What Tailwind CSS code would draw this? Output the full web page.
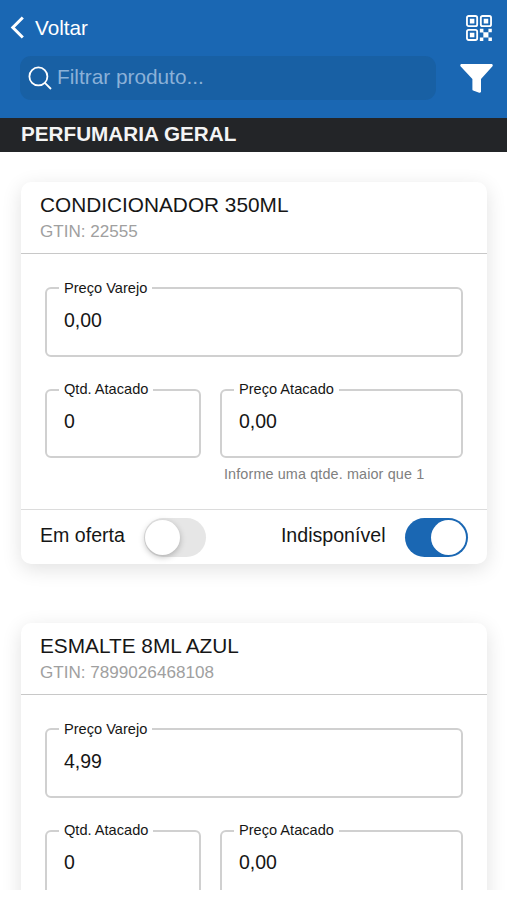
<!DOCTYPE html>
<html lang="pt-BR">
<head>
  <meta charset="UTF-8" />
  <meta name="viewport" content="width=device-width, initial-scale=1.0"/>
  <title>Produtos</title>
  <script src="https://cdn.jsdelivr.net/npm/@tailwindcss/browser@4"></script>
</head>

<body class="bg-white font-['Liberation_Sans',Arial,sans-serif] text-[#161616]">
  <div class="h-[890px] overflow-hidden">

    <!-- Topo -->
    <header class="h-[118px] bg-[#1a67b3] text-white">
      <div class="flex h-14 items-center justify-between pl-[10px] pr-[15px]">
        <a class="flex items-center text-[20.7px]">
          <svg class="mr-[11px] h-[23px] w-[14px] -mt-px" viewBox="0 0 14 23" fill="none" stroke="currentColor" stroke-width="3"><path d="M12.8 1.5 2.8 11.5l10 10"/></svg>
          Voltar
        </a>
        <svg class="h-[26px] w-[26px]" viewBox="0 0 27 27" fill="none" stroke="currentColor" stroke-width="1.9">
          <rect x="1" y="1" width="10.6" height="10.6" rx="1.8"/>
          <rect x="15.4" y="1" width="10.6" height="10.6" rx="1.8"/>
          <rect x="1" y="15.4" width="10.6" height="10.6" rx="1.8"/>
          <path fill="currentColor" stroke="none" d="M4 4h4.7v4.7H4zM18.4 4h4.7v4.7h-4.7zM4 18.4h4.7v4.7H4zM14.4 14.4h3.7v3.7h-3.7zM23.3 14.4h3.5v3.5h-3.5zM18 18h5.3v5.3H18zM14.4 23.3H18v3.6h-3.6zM23.3 23.3h3.6v3.6h-3.6z"/>
        </svg>
      </div>
      <div class="flex items-center justify-between pl-5 pr-[14px]">
        <div class="flex h-11 w-[416px] items-center rounded-[11px] bg-[#1860a4] pl-2 text-[20.8px] text-[#8bb1d8]">
          <svg class="mr-[5px] h-6 w-6 text-white" viewBox="0 0 24 24" fill="none" stroke="currentColor" stroke-width="1.8"><circle cx="10.4" cy="10.4" r="9"/><path d="m16.6 16.6 6.4 6.4"/></svg>
          <span class="-mt-0.5">Filtrar produto...</span>
        </div>
        <svg class="h-[29px] w-[33px]" viewBox="0 0 33 29" fill="currentColor"><path d="M1.2 0h30.6q1.5.7.7 2.2L21 15v12.8q-.4 1.2-1.8 1l-6.1-2.2q-.7-.4-.7-1.2V15L.5 2.2Q-.2.7 1.2 0z"/></svg>
      </div>
    </header>

    <h1 class="h-[34px] bg-[#232528] pl-[21px] text-[20.7px]/[32px] font-bold text-[#f4f4f4]">PERFUMARIA GERAL</h1>

    <!-- Lista de produtos -->
    <main id="produtos" class="flex flex-col gap-[59px] px-[20.5px] pt-[30px]"></main>
  </div>

  <script>
    const produtos = [
      { nome: "CONDICIONADOR 350ML", gtin: "22555", varejo: "0,00", qtd: "0", atacado: "0,00", aberto: true },
      { nome: "ESMALTE 8ML AZUL", gtin: "7899026468108", varejo: "4,99", qtd: "0", atacado: "0,00", aberto: false }
    ];

    function campo(rotulo, valor) {
      return `
        <fieldset class="h-[77px] rounded-[6px] border-2 border-[#d0d0d0] pl-[12.5px]">
          <legend class="px-[5px] text-[14.6px]/[17px]">${rotulo}</legend>
          <p class="pl-[5px] pt-[11px] text-[19.5px]/[24px]">${valor}</p>
        </fieldset>`;
    }

    const rodape = `
        <div class="flex h-[55px] items-center justify-between border-t border-[#dcdcdc] pl-[19.5px] pr-[19px] text-[19.6px]">
          <div class="flex items-center gap-[19px]">
            <span class="-mt-[3px]">Em oferta</span>
            <span class="flex h-[39px] w-[62px] items-center rounded-full bg-[#e6e6e6] pl-px">
              <span class="h-[35px] w-[35px] rounded-full bg-white shadow-[0_2px_6px_rgba(0,0,0,0.25)]"></span>
            </span>
          </div>
          <div class="flex items-center gap-[19px]">
            <span class="-mt-[3px]">Indisponível</span>
            <span class="flex h-[39px] w-[63px] items-center justify-end rounded-full bg-[#1a67b3] pr-[2px]">
              <span class="h-[35px] w-[35px] rounded-full bg-white"></span>
            </span>
          </div>
        </div>`;

    document.getElementById('produtos').innerHTML = produtos.map(p => `
      <section class="h-[382px] shrink-0 rounded-[10px] bg-white shadow-[0_5px_20px_rgba(0,0,0,0.12)]">
        <div class="h-[72px] border-b border-[#c8c8c8] pl-[19.5px] pt-[10px]">
          <h2 class="text-[20.8px]/[25px]">${p.nome}</h2>
          <p class="mt-[4px] text-[17.1px]/[22px] text-[#a0a0a0]">GTIN: ${p.gtin}</p>
        </div>
        <div class="h-[255px] px-[24px] pt-[25.5px]">
          ${campo("Preço Varejo", p.varejo)}
          <div class="mt-[24.5px] grid grid-cols-[156px_1fr] gap-[19px]">
            ${campo("Qtd. Atacado", p.qtd)}
            ${campo("Preço Atacado", p.atacado)}
          </div>
          ${p.aberto ? `<p class="mt-[7px] pl-[179.5px] text-[14.4px]/[18px] tracking-[0.12px] text-[#808080]">Informe uma qtde. maior que 1</p>` : ""}
        </div>
        ${p.aberto ? rodape : ""}
      </section>`).join("");
  </script>
</body>
</html>
